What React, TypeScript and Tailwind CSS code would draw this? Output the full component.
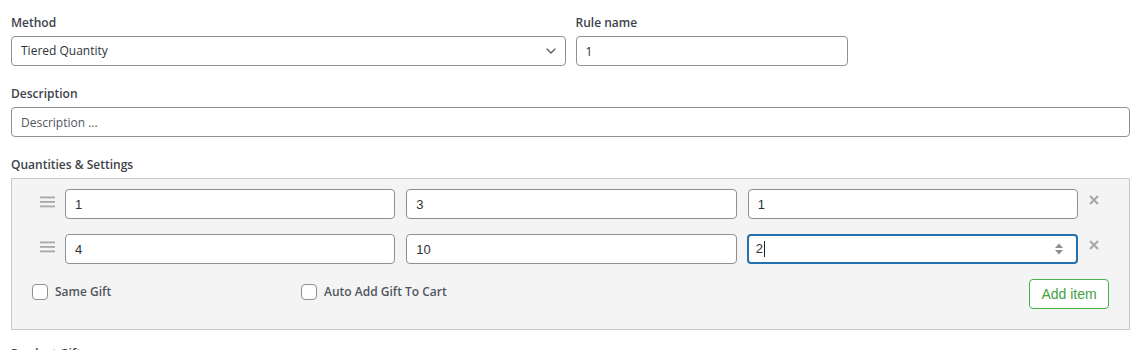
import { ChevronDown } from 'lucide-react'

const rows = [
  ['1', '3', '1'],
  ['4', '10', '2'],
]

function Handle() {
  return (
    <svg width="15" height="12" viewBox="0 0 15 12" className="mt-[7px] ml-[8px] shrink-0">
      <rect x="0" y="0.5" width="15" height="1.8" fill="#a3aba3" />
      <rect x="0" y="5" width="15" height="1.8" fill="#a3aba3" />
      <rect x="0" y="9.5" width="15" height="1.8" fill="#a3aba3" />
    </svg>
  )
}

function RemoveIcon() {
  return (
    <div className="w-[31px] shrink-0 pl-[11px] pt-[6px]">
      <svg width="10" height="10" viewBox="0 0 10 10">
        <path d="M1 1L9 9M9 1L1 9" stroke="#a7aaad" strokeWidth="2.2" />
      </svg>
    </div>
  )
}

function NumberBox({ value, focused }: { value: string; focused?: boolean }) {
  if (focused) {
    return (
      <div className="relative -ml-px flex h-[30px] items-center rounded-[4px] border-2 border-[#2271b1] bg-white pl-[7px] font-['Liberation_Sans',Arial,sans-serif] text-[13px] text-[#2c3338]">
        <span>{value}</span>
        <span className="ml-[1px] h-[16px] w-px bg-[#1d2327]" />
        <svg width="10" height="14" viewBox="0 0 10 14" className="absolute right-[12px] top-[6px]">
          <path d="M1 6L5 1.5L9 6Z" fill="#8c8f94" />
          <path d="M1 8L5 12.5L9 8Z" fill="#8c8f94" />
        </svg>
      </div>
    )
  }
  return (
    <input
      readOnly
      value={value}
      className="h-[30px] w-full rounded-[4px] border border-[#8c8f94] bg-white px-[9px] font-['Liberation_Sans',Arial,sans-serif] text-[13px] text-[#2c3338] outline-none"
    />
  )
}

function Checkbox({ label }: { label: string }) {
  return (
    <label className="flex w-[269px] items-center gap-[7px]">
      <span className="h-[16px] w-[16px] rounded-[4px] border border-[#8c8f94] bg-white" />
      <span className="text-[12px] font-semibold text-[#50575e]">{label}</span>
    </label>
  )
}

export default function App() {
  return (
    <main className="min-h-screen bg-white pl-[11px] pt-[14px] font-['Open_Sans',sans-serif] text-[#2c3338]">
      <div className="w-[1119px]">
        <div className="grid grid-cols-4 gap-x-[10px]">
          <div className="col-span-2">
            <div className="mb-[4px] text-[12px] leading-[18px] font-semibold text-[#3c434a]">Method</div>
            <div className="flex h-[30px] items-center justify-between rounded-[4px] border border-[#8c8f94] bg-white pl-[9px] pr-[6px] text-[12px]">
              <span>Tiered Quantity</span>
              <ChevronDown size={16} strokeWidth={1.8} color="#50575e" />
            </div>
          </div>
          <div>
            <div className="mb-[4px] text-[12px] leading-[18px] font-semibold text-[#3c434a]">Rule name</div>
            <input
              readOnly
              value="1"
              className="h-[30px] w-full rounded-[4px] border border-[#8c8f94] bg-white px-[9px] text-[12px] text-[#2c3338] outline-none"
            />
          </div>
        </div>

        <div className="mt-[19px]">
          <div className="mb-[4px] text-[12px] leading-[18px] font-semibold text-[#3c434a]">Description</div>
          <input
            readOnly
            placeholder="Description ..."
            className="h-[30px] w-full rounded-[4px] border border-[#8c8f94] bg-white px-[9px] text-[12px] outline-none placeholder:text-[#50575e]"
          />
        </div>

        <div className="mt-[19px]">
          <div className="mb-[4px] text-[12px] leading-[18px] font-semibold text-[#3c434a]">Quantities &amp; Settings</div>
          <div className="border border-[#c8c8c8] bg-[#f4f4f4] px-[20px] pt-[10px] pb-[20px]">
            <div className="flex flex-col gap-[15px]">
              {rows.map((row, i) => (
                <div key={i} className="flex items-start">
                  <Handle />
                  <div className="ml-[10px] grid flex-1 grid-cols-3 gap-[11px]">
                    {row.map((v, j) => (
                      <NumberBox key={j} value={v} focused={i === 1 && j === 2} />
                    ))}
                  </div>
                  <RemoveIcon />
                </div>
              ))}
            </div>
            <div className="mt-[15px] flex items-start">
              <div className="mt-[4px] flex">
                <Checkbox label="Same Gift" />
                <Checkbox label="Auto Add Gift To Cart" />
              </div>
              <button className="ml-auto h-[30px] w-[80px] rounded-[4px] border border-[#4ab04a] bg-white font-['Liberation_Sans',Arial,sans-serif] text-[14px] text-[#46a046]">
                Add item
              </button>
            </div>
          </div>
        </div>

        <div className="mt-[15px] text-[12px] leading-[18px] font-semibold text-[#3c434a]">Product Gift</div>
      </div>
    </main>
  )
}
